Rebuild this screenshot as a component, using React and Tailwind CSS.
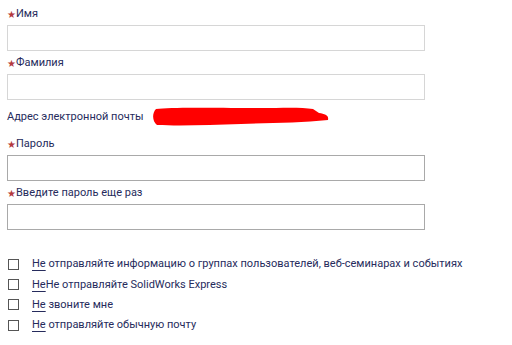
import React from "react";

const font = { fontFamily: "Roboto, 'Noto Sans', 'Liberation Sans', sans-serif" };

function Label({ text, required = true }) {
  return (
    <div className="h-[16px] flex items-center text-[11px] leading-[16px] text-[#262b5c]">
      {required && <span className="text-[#b43a3e] text-[10px] mt-[2px]">★</span>}
      <span>{text}</span>
    </div>
  );
}

function Input({ dark }) {
  return (
    <div
      className={`mt-[3px] h-[26px] w-[418px] bg-white border ${dark ? "border-[#a9a9a9]" : "border-[#d6d6d6]"}`}
    />
  );
}

function Check({ children }) {
  return (
    <div className="h-[20.4px] flex items-center">
      <div className="w-[11px] h-[11px] border border-[#555] ml-[1px]" />
      <div className="ml-[13px] text-[11px] text-[#262b5c] leading-[14px]">{children}</div>
    </div>
  );
}

export default function App() {
  return (
    <div className="w-[512px] h-[345px] bg-white overflow-hidden pl-[7px] pt-[6px]" style={font}>
      <Label text="Имя" />
      <Input />
      <div className="h-[4px]" />
      <Label text="Фамилия" />
      <Input />
      <div className="h-[9px] " />
      <div className="h-[16px] flex items-center text-[11px] text-[#262b5c]">
        <span>Адрес электронной почты</span>
        <svg width="180" height="22" viewBox="0 0 180 22" className="ml-[7px] -mt-[1px]">
          <path
            d="M5 3 C20 1, 60 2, 110 2 C130 2, 150 1, 162 3 L168 7 C174 8, 178 9, 177 14 C150 17, 120 17, 90 18 C60 19, 30 20, 6 19 C1 15, 1 7, 5 3 Z"
            fill="#ff0000"
          />
        </svg>
      </div>
      <div className="h-[11px]" />
      <Label text="Пароль" />
      <Input dark />
      <div className="h-[4px]" />
      <Label text="Введите пароль еще раз" />
      <Input dark />
      <div className="h-[24px]" />
      <Check>
        <span className="underline decoration-[#262b5c] underline-offset-[3px]">Не</span> отправляйте информацию о группах пользователей, веб-семинарах и событиях
      </Check>
      <Check>
        <span className="underline decoration-[#262b5c] underline-offset-[3px]">Не</span>Не отправляйте SolidWorks Express
      </Check>
      <Check>
        <span className="underline decoration-[#262b5c] underline-offset-[3px]">Не</span> звоните мне
      </Check>
      <Check>
        <span className="underline decoration-[#262b5c] underline-offset-[3px]">Не</span> отправляйте обычную почту
      </Check>
    </div>
  );
}
